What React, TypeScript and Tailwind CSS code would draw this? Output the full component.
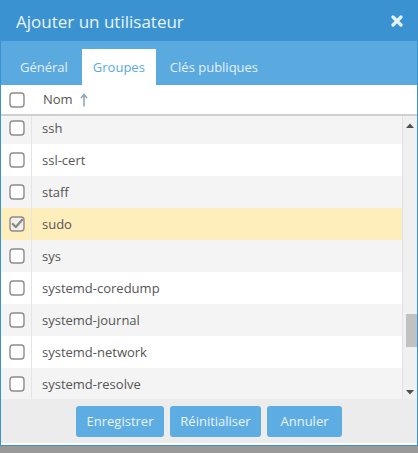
import React from "react";

const rows = [
  "ssh",
  "ssl-cert",
  "staff",
  "sudo",
  "sys",
  "systemd-coredump",
  "systemd-journal",
  "systemd-network",
  "systemd-resolve",
];

function Box({ checked = false }: { checked?: boolean }) {
  return (
    <svg width="16" height="16" viewBox="0 0 16 16">
      <rect x="1" y="1" width="14" height="14" rx="3" fill={checked ? "#f1efe8" : "#ffffff"} stroke="#8c8c8c" strokeWidth="1.4" />
      {checked && (
        <path d="M3.8 8 L6.8 11 L13 4" fill="none" stroke="#8a8a8a" strokeWidth="2.4" strokeLinecap="round" strokeLinejoin="round" />
      )}
    </svg>
  );
}

export default function App() {
  return (
    <div className="w-[418px] h-[453px] bg-[#999999] flex flex-col" style={{ fontFamily: '"Open Sans", "Noto Sans", sans-serif' }}>
      <div className="h-[446px] border-x border-b border-[#3a93d0] bg-white flex flex-col overflow-hidden">
        <div className="h-[41px] shrink-0 bg-[#3a93d0] flex items-center justify-between pl-[15px] pr-[14px]">
          <span className="text-[17px] text-[#eaf3fa] leading-none pt-[1px]">Ajouter un utilisateur</span>
          <svg width="12" height="12" viewBox="0 0 12 12">
            <path d="M2 2 L10 10 M10 2 L2 10" stroke="#e6f1f9" strokeWidth="3.2" strokeLinecap="round" />
          </svg>
        </div>
        <div className="h-[44px] shrink-0 bg-[#5aaadf] flex items-end pl-[8px] gap-[3px] text-[13px]">
          <div className="h-[36px] px-[11px] flex items-center pt-[1px] text-[#e4f0f9]">Général</div>
          <div className="h-[36px] px-[11px] flex items-center pt-[1px] bg-white text-[#5aaadf]">Groupes</div>
          <div className="h-[36px] px-[11px] flex items-center pt-[1px] text-[#e4f0f9]">Clés publiques</div>
        </div>
        <div className="h-[31px] shrink-0 flex items-center border-b-2 border-[#cfcfcf] text-[13px] text-[#555555]">
          <div className="w-[31px] flex justify-center pl-[1px] pt-[1px]">
            <Box />
          </div>
          <div className="pl-[11px] flex items-center gap-[7px] pt-[1px]">
            <span>Nom</span>
            <svg width="8" height="14" viewBox="0 0 8 14">
              <path d="M4 13.5 V2 M1 5 L4 1.5 L7 5" fill="none" stroke="#93a6b6" strokeWidth="1.6" />
            </svg>
          </div>
        </div>
        <div className="h-[283px] shrink-0 flex overflow-hidden">
          <div className="flex-1 overflow-hidden">
            <div className="-mt-[4px] flex flex-col">
              {rows.map((r, i) => (
                <div
                  key={r}
                  className={
                    "h-[32px] flex items-center text-[13px] text-[#555555] " +
                    (r === "sudo" ? "bg-[#fdeebb]" : i % 2 === 0 ? "bg-[#f4f4f4]" : "bg-white")
                  }
                >
                  <div className="w-[31px] h-full flex items-center justify-center pl-[1px] border-r border-[#e4e4e4]">
                    <Box checked={r === "sudo"} />
                  </div>
                  <div className="pl-[10px] pt-[1px]">{r}</div>
                </div>
              ))}
            </div>
          </div>
          <div className="w-[15px] h-full bg-[#f0f0f0] border-l border-[#e2e2e2] flex flex-col items-center">
            <svg width="8" height="5" viewBox="0 0 8 5" className="mt-[7px]">
              <path d="M0 5 L4 0.5 L8 5 Z" fill="#505050" />
            </svg>
            <div className="mt-[186px] ml-[3px] w-[11px] h-[33px] bg-[#c1c1c1]" />
            <svg width="8" height="5" viewBox="0 0 8 5" className="mt-[43px]">
              <path d="M0 0 L8 0 L4 4.5 Z" fill="#505050" />
            </svg>
          </div>
        </div>
        <div className="h-[44px] shrink-0 bg-[#ececec] flex justify-center items-start pt-[7px] gap-[6px] text-[13px] text-[#eaf4fb]">
          <div className="w-[88px] h-[31px] rounded-[3px] bg-[#5dade2] flex items-center justify-center">Enregistrer</div>
          <div className="w-[91px] h-[31px] rounded-[3px] bg-[#5dade2] flex items-center justify-center">Réinitialiser</div>
          <div className="w-[75px] h-[31px] rounded-[3px] bg-[#5dade2] flex items-center justify-center">Annuler</div>
        </div>
      </div>
    </div>
  );
}
